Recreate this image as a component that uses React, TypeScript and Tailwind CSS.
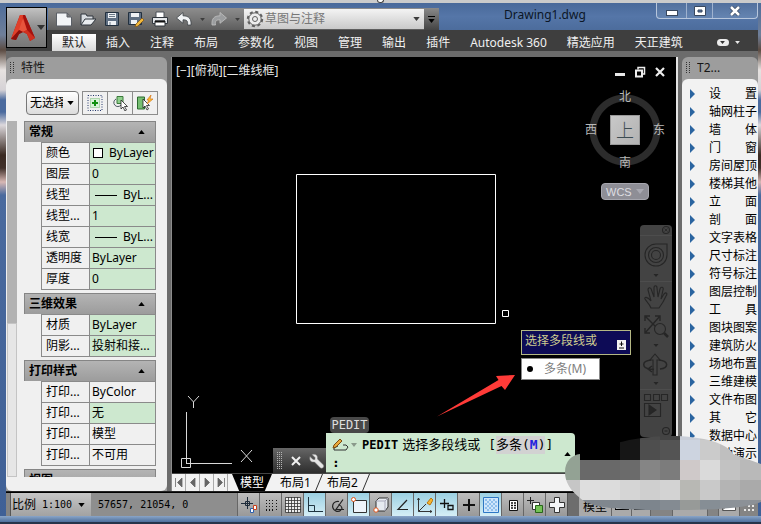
import { useState, type ReactNode } from "react";
import clsx from "clsx";
import { twMerge } from "tailwind-merge";

type Value = { label: string; value: string; kind?: "swatch" | "line"; plain?: boolean };

const sections: { title: string; rows: Value[] }[] = [
  {
    title: "常规",
    rows: [
      { label: "颜色", value: "ByLayer", kind: "swatch" },
      { label: "图层", value: "0" },
      { label: "线型", value: "ByL...", kind: "line" },
      { label: "线型...", value: "1" },
      { label: "线宽", value: "ByL...", kind: "line" },
      { label: "透明度", value: "ByLayer" },
      { label: "厚度", value: "0" },
    ],
  },
  {
    title: "三维效果",
    rows: [
      { label: "材质", value: "ByLayer" },
      { label: "阴影...", value: "投射和接..." },
    ],
  },
  {
    title: "打印样式",
    rows: [
      { label: "打印...", value: "ByColor", plain: true },
      { label: "打印...", value: "无" },
      { label: "打印...", value: "模型", plain: true },
      { label: "打印...", value: "不可用", plain: true },
    ],
  },
  { title: "视图", rows: [] },
];

const ribbonTabs = [
  "默认", "插入", "注释", "布局", "参数化", "视图", "管理", "输出", "插件",
  "Autodesk 360", "精选应用", "天正建筑",
];

const menuItems = [
  "设置", "轴网柱子", "墙体", "门窗", "房间屋顶", "楼梯其他", "立面", "剖面",
  "文字表格", "尺寸标注", "符号标注", "图层控制", "工具", "图块图案", "建筑防火",
  "场地布置", "三维建模", "文件布图", "其它", "数据中心", "帮助演示",
];

/* ---------- quick access icons ---------- */

const quickIcons: { name: string; icon: ReactNode }[] = [
  {
    name: "新建",
    icon: <path d="M.5 2h10.500l4.500 4v9H.5zM11 2v4h4" fill="#f2f4f6" stroke="#5a5f66" />,
  },
  {
    name: "打开",
    icon: (
      <>
        <path d="M1 14V3h5l1 2h6v3" fill="#d9dde1" stroke="#2f353c" />
        <path d="M1 14l4-6h11l-5 6z" fill="#e9ecef" stroke="#2f353c" />
      </>
    ),
  },
  {
    name: "保存",
    icon: (
      <>
        <path d="M1.500 1.500h13v13h-13z" fill="#5f6f82" stroke="#22303f" />
        <path d="M4 2h8v5H4zM4 10h8v4H4z" fill="#eef1f4" />
        <path d="M5 3.500h6M5 5.500h6M6 11v3" stroke="#6d7a88" />
      </>
    ),
  },
  {
    name: "另存为",
    icon: (
      <>
        <path d="M.5 1.500h13v12H.5z" fill="#5f6f82" stroke="#22303f" />
        <path d="M3 2h8v4H3zM3 9h6v4H3z" fill="#eef1f4" />
        <path d="M8 13l6-6 2 2-6 6-3 1z" fill="#f3b93a" stroke="#7a4d12" strokeWidth=".7" />
      </>
    ),
  },
  {
    name: "打印",
    icon: (
      <>
        <path d="M4 6V1h8v5" fill="#fff" stroke="#4b5158" />
        <path d="M.5 6.500h15v6H.5z" fill="#e3e6e9" stroke="#30363d" />
        <path d="M3 10h10v5H3z" fill="#fff" stroke="#30363d" />
        <path d="M3 10.500h10" stroke="#111" strokeWidth="2" />
      </>
    ),
  },
  {
    name: "放弃",
    icon: <path d="M.5 7L7 1.500v3.300c6 0 8.500 3 8 9.200h-3.500c.5-4-.5-5.200-4.500-5.200v3.500z" fill="#f1f3f5" stroke="#3c4248" strokeWidth=".8" />,
  },
];

function Caret({ className }: { className?: string }) {
  return (
    <svg viewBox="0 0 8 5" className={twMerge("h-[5px] w-2 shrink-0", className)} fill="currentColor">
      <path d="M0 0h8L4 5z" />
    </svg>
  );
}

function TitleBar() {
  return (
    <div className="flex h-[27px] bg-linear-to-b from-[#49699a] via-[#5576a8] to-[#4c6c9c] pl-[42px]">
      <div className="mt-[5px] flex h-[22px] w-[391px] shrink-0 items-center bg-linear-to-b from-[#8d8d8d] via-[#777] to-[#5d5d5d] pl-2">
        {quickIcons.map((q) => (
          <button key={q.name} aria-label={q.name} className="mr-2 size-4 shrink-0">
            <svg viewBox="0 0 16 16" className="size-4">{q.icon}</svg>
          </button>
        ))}
        <Caret className="h-[3px] w-[5px] text-[#3c3c3c]" />
        <button aria-label="重做" className="mr-2 ml-1.5 size-4 shrink-0">
          <svg viewBox="0 0 16 16" className="size-4">
            <path d="M15.500 7L9 1.500v3.300c-6 0-8.500 3-8 9.200h3.500c-.5-4 .5-5.200 4.500-5.200v3.500z" fill="#9b9d9f" stroke="#c2c2c2" strokeWidth=".8" />
          </svg>
        </button>
        <Caret className="h-[3px] w-[5px] text-[#3c3c3c]" />
        <label className="relative ml-1 flex h-5 flex-1 items-center bg-linear-to-b from-[#f4f4f4] to-[#c9c9c9] text-[#777]">
          <svg viewBox="0 0 18 18" className="ml-0.5 size-[18px] shrink-0" fill="none" stroke="#606060">
            <circle cx="9" cy="9" r="7" strokeWidth="2.400" strokeDasharray="3 2.500" />
            <circle cx="9" cy="9" r="6.200" fill="#ededed" />
            <circle cx="9" cy="9" r="2.500" />
          </svg>
          <select aria-label="工作空间" className="h-5 flex-1 appearance-none bg-transparent pl-px text-xs outline-none">
            <option>草图与注释</option>
          </select>
          <Caret className="mr-1 h-1 w-[7px] text-[#3c3c3c]" />
        </label>
        <button aria-label="自定义快速访问工具栏" className="flex h-[22px] w-[15px] flex-col items-center justify-center gap-0.5 bg-linear-to-b from-[#8a8a8a] to-[#444] text-black">
          <span className="h-px w-[7px] bg-black" />
          <Caret className="h-1 w-[7px]" />
        </button>
      </div>
      <h1 className="min-w-0 flex-1 truncate pl-[65px] text-xs leading-6 text-[#0b1626]">Drawing1.dwg</h1>
      <div className="flex h-4 overflow-hidden rounded-b border border-t-0 border-[#b7c6dc] bg-linear-to-b from-[#52709d] to-[#6585b2]">
        <button aria-label="最小化" className="flex w-[30px] items-center justify-center border-r border-[#9fb2cf]">
          <span className="mt-1 h-1.5 w-3 border border-[#39485e] bg-white" />
        </button>
        <button aria-label="最大化" className="flex w-[26px] items-center justify-center border-r border-[#9fb2cf]">
          <svg viewBox="0 0 12 10" className="h-2.5 w-3">
            <path d="M.5.5h11v9H.5z" fill="#fff" stroke="#39485e" />
            <path d="M4 4h4v2H4z" fill="#5876a3" stroke="#39485e" />
          </svg>
        </button>
        <button aria-label="关闭" className="flex w-[44px] items-center justify-center">
          <svg viewBox="0 0 12 10" className="h-2.5 w-3">
            <path d="M2 1l8 8M10 1L2 9" stroke="#39485e" strokeWidth="4" />
            <path d="M2 1l8 8M10 1L2 9" stroke="#fff" strokeWidth="2.500" />
          </svg>
        </button>
      </div>
    </div>
  );
}

function AppButton() {
  return (
    <button
      aria-label="应用程序菜单"
      className="absolute top-1 left-0 flex h-[41px] w-[41px] items-center gap-0.5 border border-black bg-linear-to-b from-[#c2c2c2] via-[#8e8e8e] to-[#777] pl-1"
    >
      <svg viewBox="0 0 24 28" className="h-7 w-6 shrink-0">
        <path d="M9 1h5l10 23-5 3-3-7-4-2-4 2-3 6-5-1z" fill="#b81a12" />
        <path d="M9 1h3l-1 13L0 25z" fill="#e0402a" />
        <path d="M14 1l10 23-8-8-4-15z" fill="#a5120e" />
        <path d="M12 4l4 12-4 2-4-2z" fill="#e8543c" />
        <path d="M12 18l4-2 8 8-5 3-3-7z" fill="#d0301f" />
        <path d="M0 25l8-9 4 2-4 2-3 6z" fill="#8c100c" />
      </svg>
      <Caret className="text-[#333]" />
    </button>
  );
}

function Ribbon() {
  const [active, setActive] = useState("默认");
  return (
    <nav className="flex h-[21px] items-end bg-[#3e3e3e] pl-[46px]">
      {ribbonTabs.map((tab) => (
        <button
          key={tab}
          onClick={() => setActive(tab)}
          className={clsx(
            "h-[17px] shrink-0 px-2.5 text-xs leading-4 whitespace-nowrap",
            tab === active ? "bg-linear-to-b from-white to-[#d9d9d9] text-[#222]" : "text-[#f0f0f0]"
          )}
        >
          {tab}
        </button>
      ))}
      <button aria-label="最小化功能区" className="ml-6 flex h-[17px] items-center gap-1.5 text-[#e8e8e8]">
        <span className="flex h-[7px] w-3 items-center justify-center rounded-sm bg-[#ececec]">
          <Caret className="h-[3px] w-[5px] text-[#333]" />
        </span>
        <Caret className="h-[3px] w-[5px]" />
      </button>
    </nav>
  );
}

/* ---------- palettes ---------- */

function PaletteHeader({ title }: { title: string }) {
  return (
    <div className="flex h-[22px] shrink-0 items-center gap-[7px] px-1 text-xs text-[#151515]">
      <svg viewBox="0 0 4 12" className="h-3 w-1 shrink-0" stroke="#333" strokeDasharray="1 1">
        <path d="M.5 0v12M3.500 0v12" />
      </svg>
      <h2 className="truncate">{title}</h2>
    </div>
  );
}

function PropertiesPalette() {
  return (
    <aside className="flex w-[161px] shrink-0 flex-col rounded-t-md bg-[#9d9d9d]">
      <PaletteHeader title="特性" />
      <div className="flex min-h-0 flex-1 flex-col rounded-md bg-[#f0f0f0] pb-3.5">
        <div className="flex h-[42px] shrink-0 items-center gap-[3px] pt-1.5 pl-5">
          <div className="relative flex h-6 w-[53px] items-center rounded border border-[#777] bg-linear-to-b from-white to-[#dcdcdc] pr-1">
            <select aria-label="选择对象" className="h-[22px] w-9 appearance-none overflow-hidden bg-transparent pl-[3px] text-xs text-clip outline-none">
              <option>无选择</option>
            </select>
            <Caret className="ml-auto h-1 w-[7px]" />
          </div>
          <div className="flex h-6 border border-[#8c8c8c]">
            <button aria-label="切换 PICKADD" className="flex w-[25px] items-center justify-center border-r border-[#8c8c8c]">
              <svg viewBox="0 0 16 16" className="size-4" fill="none">
                <path d="M1 .5h14v15H1z" stroke="#23366b" strokeDasharray="1 1.500" />
                <path d="M3.500 3.500h9v9h-9z" fill="#d7f2d7" stroke="#79b979" strokeDasharray="1 1" />
                <path d="M8 5v6M5 8h6" stroke="#109010" strokeWidth="2" />
              </svg>
            </button>
            <button aria-label="选择对象" className="flex w-[25px] items-center justify-center border-r border-[#8c8c8c]">
              <svg viewBox="0 0 16 16" className="size-4" strokeWidth="1">
                <path d="M5 1.500h6v7H5z" fill="#8fcf8c" stroke="#3b7a3b" />
                <path d="M4 4a4 4 0 1 0 5 6" fill="none" stroke="#4b5560" />
                <path d="M9 5v9l2-2 2 4 1.500-1-2-3.500h3z" fill="#fff" stroke="#222" strokeWidth=".8" />
              </svg>
            </button>
            <button aria-label="快速选择" className="flex w-6 items-center justify-center">
              <svg viewBox="0 0 16 16" className="size-4" strokeWidth="1">
                <path d="M.5 2h7v12h-7z" fill="#76be72" stroke="#2d6b2f" />
                <path d="M6 4v9l2-2 2 4 1.500-1-2-3.500h3z" fill="#fff" stroke="#222" strokeWidth=".8" />
                <path d="M14 0l-4 5h2l-2 4 6-5h-3z" fill="#ffc634" stroke="#d5761a" strokeWidth=".7" />
              </svg>
            </button>
          </div>
        </div>
        <div className="flex min-h-0 flex-1">
          <div className="flex w-[11px] shrink-0 flex-col pl-px">
            <div className="h-[202px] shrink-0 bg-[#b2b2b2]" />
            <div className="min-h-0 flex-1 border border-[#c4c4c4] bg-[#e6e6e6]" />
          </div>
          <div className="ml-[7px] w-[132px] overflow-hidden">
            {sections.map((s) => (
              <section key={s.title} className="mb-[3px]">
                <button className="flex h-[21px] w-full items-center justify-between border border-b-0 border-[#858585] bg-linear-to-b from-[#b4b4b4] to-[#9c9c9c] pr-2.5 pl-1 text-xs leading-4 font-bold text-black">
                  {s.title}
                  <Caret className="h-1 w-[7px] rotate-180" />
                </button>
                <table className="ml-[17px] w-[115px] table-fixed border-collapse text-xs text-black">
                  <tbody>
                    {s.rows.map((r, i) => (
                      <tr key={i}>
                        <th scope="row" className="h-[21px] w-12 border border-[#8a8a8a] p-0 pl-1 text-left leading-5 font-normal whitespace-nowrap">
                          {r.label}
                        </th>
                        <td className={clsx("h-[21px] border border-[#8a8a8a] p-0 pl-0.5 leading-5 whitespace-nowrap", !r.plain && "bg-[#cde8cf]")}>
                          <span className="flex items-center">
                            {r.kind === "swatch" && <span className="mr-1.5 ml-px size-2.5 border border-black bg-white" />}
                            {r.kind === "line" && <span className="mr-1.5 ml-[3px] h-px w-[22px] bg-black" />}
                            {r.value}
                          </span>
                        </td>
                      </tr>
                    ))}
                  </tbody>
                </table>
              </section>
            ))}
          </div>
        </div>
      </div>
    </aside>
  );
}

function ToolPalette() {
  return (
    <aside className="flex w-[76px] shrink-0 flex-col overflow-hidden rounded-t-md bg-[#9d9d9d]">
      <PaletteHeader title="T2..." />
      <ul className="min-h-0 flex-1 overflow-hidden rounded-t-md bg-[#f2f2f2] pt-1.5">
        {menuItems.map((m) => (
          <li key={m}>
            <button className="flex h-[18px] w-full items-center pl-2 text-xs leading-[18px] text-black">
              <svg viewBox="0 0 5 10" className="h-2.5 w-[5px]">
                <path d="M0 0l5 5-5 5z" fill="#2a64a0" />
              </svg>
              <span className="ml-3.5 flex w-12 shrink-0 justify-between">
                {m.length === 2 ? (
                  <>
                    <span>{m[0]}</span>
                    <span>{m[1]}</span>
                  </>
                ) : (
                  m
                )}
              </span>
            </button>
          </li>
        ))}
      </ul>
    </aside>
  );
}

/* ---------- drawing area ---------- */

function ViewCube() {
  return (
    <div className="absolute top-[30px] right-[11px] text-xs leading-4 text-[#b9b9b9]">
      <div className="grid grid-cols-[22px_36px_22px] grid-rows-[20px_46px_20px] place-items-center bg-[radial-gradient(circle,transparent_28px,#2c2c2c_29px,#2c2c2c_35px,transparent_36px)]">
        <span className="col-start-2">北</span>
        <span className="col-start-1 row-start-2 mr-2.5">西</span>
        <button className="col-start-2 row-start-2 size-[30px] border border-[#999] bg-linear-to-br from-[#c8c8c8] to-[#b2b2b2] text-lg leading-6 font-light text-[#3c4c52]">
          上
        </button>
        <span className="col-start-3 row-start-2 ml-2.5">东</span>
        <span className="col-start-2 row-start-3">南</span>
      </div>
      <button className="mt-2.5 ml-4 flex h-[17px] w-12 items-center justify-between rounded border border-[#a6a6ae] bg-[#8e8e96] px-1 font-['Liberation_Sans',sans-serif] text-[11px] text-[#dedee2]">
        WCS
        <Caret className="text-[#a9a9b2]" />
      </button>
    </div>
  );
}

function NavigationBar() {
  return (
    <div className="absolute top-[168px] right-1 w-8 rounded bg-[#434343]">
      <svg viewBox="0 0 32 212" className="h-[212px] w-8" fill="none" stroke="#262626" strokeWidth="1.100">
        <circle cx="26" cy="5" r="3.500" />
        <path d="M24.500 3.500l3 3M27.500 3.500l-3 3" strokeWidth=".8" />
        <path d="M0 10.500h32M0 56.500h32M0 164.500h32" stroke="#505050" strokeWidth=".8" />
        <path d="M16 19h11v11a11 11 0 1 1-11-11z" />
        <circle cx="16" cy="30" r="7.500" />
        <circle cx="16" cy="30" r="4.500" />
        <path d="M13.500 49h5L16 52zM13.500 119h5l-2.500 3zM13.500 157h5l-2.500 3z" fill="#262626" stroke="none" />
        <path d="M11 83c-2-5-5-7-6-9s2-3 6 2L8 65c0-3 3-3 3.500 0L14 72V63c0-3 3-3 3 0l1 9 2-8c1-3 4-2 3 1l-2 9 3-5c2-2 4-1 2 2-2 5-4 8-7 12z" />
        <path d="M5 91l18 18M20 91L5 108M5 96v-5h5M15 91h5v5M5 103v5h5" strokeWidth="1.400" />
        <circle cx="20" cy="104" r="5.500" fill="#434343" />
        <path d="M24 108l4 4" strokeWidth="2.500" />
        <path d="M13 150v-15h-3l5-6 5 6h-3v15z" />
        <path d="M19 135c10 1 10 8 1 9M11 135c-10 1-9 8-1 9l4 .5M12 141l-4 3 4 3" strokeWidth="1.500" />
        <path d="M4.500 169.500h6v6h-6zM13.500 169.500h6v6h-6zM21.500 169.500h6v6h-6zM4.500 178.500h16v13h-16z" />
        <path d="M9 180v10l7-5z" fill="#262626" />
        <circle cx="26" cy="206" r="3.500" />
        <path d="M24.500 206h3" />
      </svg>
    </div>
  );
}

function CommandLine() {
  return (
    <div className="absolute bottom-0 left-[101px] flex items-end">
      <div className="flex h-[25px] w-[53px] items-center gap-2 bg-linear-to-b from-[#666] to-[#2e2e2e] pl-1">
        <svg viewBox="0 0 6 17" className="h-[17px] w-1.5 shrink-0" stroke="#b5b5b5" strokeDasharray="1 1">
          <path d="M.5 0v17M2.500 0v17M4.500 0v17" />
        </svg>
        <button aria-label="关闭命令行">
          <svg viewBox="0 0 10 10" className="size-2.5" stroke="#f0f0f0" strokeWidth="2">
            <path d="M1 1l8 8M9 1L1 9" />
          </svg>
        </button>
        <button aria-label="自定义">
          <svg viewBox="0 0 16 16" className="size-4">
            <path d="M3 1.500l3 3v2H4l-3-3c-1 4 1 6 4.500 5.500l6 6c2 1 4-1 3-3l-6-6C9 2.500 7 .5 3 1.500z" fill="#e5e5e5" stroke="#777" strokeWidth=".5" />
          </svg>
        </button>
      </div>
      <div>
        <div className="ml-1 flex h-4 w-[39px] items-center justify-center rounded-sm bg-[#484848] font-['DejaVu_Sans_Mono',monospace] text-xs text-[#ddd]">
          PEDIT
        </div>
        <div className="relative h-10 w-[249px] rounded-tr border-b border-[#5e6d5f] bg-[#cde8cf] pt-[3px] pl-1.5 font-['DejaVu_Sans_Mono','Noto_Sans_CJK_SC',monospace] text-[13px] leading-[18px] text-black">
          <div className="flex items-center whitespace-nowrap">
            <svg viewBox="0 0 26 14" className="h-3.5 w-[26px] shrink-0">
              <path d="M6 8l-4 2v2h12l2-3-2-2h-3" fill="none" stroke="#333" />
              <path d="M1 10l1-3 6-6 2 2-6 6z" fill="#e9a83a" stroke="#7b4a10" />
              <path d="M19 5h6l-3 4z" fill="#8a9a8b" />
            </svg>
            <b className="ml-1 text-xs">PEDIT</b>
            <span className="ml-1">选择多段线或</span>
            <span className="ml-2">[</span>
            <button className="bg-[#d2d2d2]">
              多条(<b className="text-[#2222dd]">M</b>)
            </button>
            <span>]</span>
          </div>
          <label>
            <b>:</b>
            <input aria-label="命令" className="w-40 bg-transparent outline-none" />
          </label>
          <Caret className="absolute right-1 bottom-4 h-1 w-[7px] rotate-180" />
        </div>
      </div>
    </div>
  );
}

function Canvas() {
  return (
    <div className="relative min-h-0 flex-1 overflow-hidden bg-black">
      <div className="pt-1.5 pl-1 text-xs leading-4 text-[#e8e8e8]">[−][俯视][二维线框]</div>
      <div className="absolute top-2 right-2.5 flex items-center gap-2 text-white">
        <button aria-label="最小化视口" className="flex h-3.5 w-3 items-end justify-center pb-[3px]">
          <span className="h-[3px] w-2.5 bg-[#e8e8e8]" />
        </button>
        <button aria-label="还原视口">
          <svg viewBox="0 0 12 12" className="size-3" fill="none" stroke="#eee">
            <path d="M4 3.500V1.500h6.500V8H9" strokeWidth="1.500" />
            <path d="M2 4.500h6v6H2z" strokeWidth="2" />
          </svg>
        </button>
        <button aria-label="关闭视口">
          <svg viewBox="0 0 12 12" className="size-3" stroke="#eee" strokeWidth="2.200">
            <path d="M2 2l8 8M10 2l-8 8" />
          </svg>
        </button>
      </div>

      {/* model geometry, pick box and pointer arrow */}
      <svg className="absolute top-0 left-0 h-[417px] w-[504px]" viewBox="0 0 504 417" fill="none" stroke="#fff">
        <path d="M124.500 117.500h199v149h-199z" />
        <path d="M330.500 253.500h6v6h-6z" />
        <path d="M265 359.500L326.500 323 324 319 343 318 333 333 329.500 329z" fill="#ff3b38" stroke="none" />
      </svg>

      {/* UCS icon */}
      <svg className="absolute bottom-0 left-0 h-[80px] w-[90px]" viewBox="0 0 90 80" fill="none" stroke="#d8d8d8">
        <path d="M14.500 19v46M9.500 65.500h9v9h-9zM14 70.500h46M14.500 65v6" />
        <path d="M16 3l5.500 6L27 3M21.500 9v6M69 57l11 12M80 57L69 69" />
      </svg>

      <ViewCube />
      <NavigationBar />

      <div className="absolute top-[273px] left-[349px]">
        <div className="flex h-[25px] w-[110px] items-center justify-between border border-[#b4b884] bg-[#0d0b56] pr-1 pl-[3px] text-xs text-[#cdcb90]">
          <span className="pb-1">选择多段线或</span>
          <svg viewBox="0 0 9 10" className="mt-1 h-2.5 w-[9px]">
            <path d="M0 0h9v10H0z" fill="#f2f2f2" />
            <path d="M4.500 1.500V6M2.500 4h4M2 8h5" stroke="#111" />
          </svg>
        </div>
        <button className="mt-[3px] flex h-[22px] w-[79px] items-center gap-[11px] border border-[#888] bg-white pl-[5px] text-xs text-[#7d7d7d]">
          <span className="size-1.5 rounded-full bg-black" />
          多条(M)
        </button>
      </div>

      <CommandLine />
    </div>
  );
}

const tabArrows = [
  { name: "第一个", d: "M3.500 3v9M10 3v9L5.500 7.500z" },
  { name: "上一个", d: "M9 3v9L4.500 7.500z" },
  { name: "下一个", d: "M5 3v9l4.500-4.500z" },
  { name: "最后一个", d: "M10.500 3v9M4 3v9l4.500-4.500z" },
];

function Slash() {
  return (
    <svg viewBox="0 0 8 17" className="h-[17px] w-2 shrink-0" stroke="#333">
      <path d="M7.500 0L.5 17" />
    </svg>
  );
}

function LayoutTabs() {
  return (
    <div className="flex h-[18px] shrink-0 items-stretch border-t border-[#444] bg-[#f2f2f2] text-xs leading-4 text-black">
      {tabArrows.map((a) => (
        <button key={a.name} aria-label={a.name} className="w-3.5 border-r border-[#aaa]">
          <svg viewBox="0 0 14 15" className="h-[15px] w-3.5" fill="#666" stroke="#666" strokeWidth=".8">
            <path d={a.d} />
          </svg>
        </button>
      ))}
      <button className="ml-1 w-10 bg-black text-white [clip-path:polygon(0_0,100%_0,82%_100%,18%_100%)]">模型</button>
      <button className="ml-2 whitespace-nowrap">布局1</button>
      <span className="ml-1">
        <Slash />
      </span>
      <button className="ml-1 whitespace-nowrap">布局2</button>
      <span className="ml-1">
        <Slash />
      </span>
    </div>
  );
}

/* ---------- status bar ---------- */

const toggles: { name: string; on?: boolean; icon: ReactNode }[] = [
  {
    name: "推断约束",
    icon: (
      <>
        <path d="M6.500 0v12M0 6.500h12" stroke="#1d2b3a" />
        <path d="M4.500 4.500h4v4h-4z" fill="none" stroke="#1d2b3a" />
        <path d="M9.500 11.500h3v4h-3z" fill="#fff" stroke="#2b5fae" />
        <path d="M12.500 8.500h3v4h-3z" fill="#fff" stroke="#c9401c" />
      </>
    ),
  },
  { name: "捕捉模式", icon: <path d="M3.500 3v11M6.500 3v11M9.500 3v11M3 13.500h9M13.500 3v11" stroke="#111" strokeDasharray="1 2" /> },
  {
    name: "栅格显示",
    icon: <path d="M.5.5h15v15H.5zM3.500 0v16M6.500 0v16M9.500 0v16M12.500 0v16M0 3.500h16M0 6.500h16M0 9.500h16M0 12.500h16" fill="#eee" stroke="#333" strokeWidth=".8" />,
  },
  { name: "正交模式", on: true, icon: <path d="M1.500 0v14.500H16M1.500 8.500h6v6" fill="none" stroke="#1f3440" /> },
  {
    name: "极轴追踪",
    icon: <path d="M15 12.500H7l7-10M10 4.500a5 5 0 1 0 2 8.500M9 8a4 4 0 0 1 4 4" fill="none" stroke="#222" strokeWidth="1.200" />,
  },
  {
    name: "对象捕捉",
    on: true,
    icon: (
      <>
        <path d="M2.500 3.500h13v12h-13z" fill="#eef4fb" stroke="#333" />
        <circle cx="2.500" cy="2.500" r="2" fill="#fff" stroke="#e0551c" />
      </>
    ),
  },
  {
    name: "三维对象捕捉",
    icon: (
      <>
        <path d="M3 4l3-3h9v9l-3 4H3z" fill="#e6eaf0" stroke="#333" />
        <path d="M3 4h9l3-3M12 4v10" fill="none" stroke="#aab" />
        <circle cx="3" cy="13" r="2.200" fill="#fff" stroke="#e0551c" />
      </>
    ),
  },
  { name: "对象捕捉追踪", on: true, icon: <path d="M13 12.500H3L12 3" fill="none" stroke="#222" strokeWidth="1.200" /> },
  {
    name: "动态 UCS",
    on: true,
    icon: (
      <>
        <path d="M1.500 1v13.500H15M1.500 14.500L9 7M.5 3l1-2 1 2M13 13.500l2 1-2 1" fill="none" stroke="#333" />
        <path d="M10 6l4-5 2 2-3 5z" fill="#f7b62f" stroke="#b97511" />
      </>
    ),
  },
  { name: "动态输入", on: true, icon: <path d="M5.500 2v9M1 6.500h9M9 8.500h5v4H9z" fill="none" stroke="#111" strokeWidth="1.300" /> },
  { name: "线宽", icon: <path d="M8 2v12M2 8h12" stroke="#111" strokeWidth="2" /> },
  {
    name: "透明度",
    on: true,
    icon: (
      <>
        <path d="M.5.5h15v15H.5z" fill="#cfe6fb" stroke="#2d77c4" />
        <path d="M2 3h12M2 7h12M2 11h12" stroke="#8fc0ec" strokeWidth="2" strokeDasharray="2 2" />
        <path d="M4 5h10M4 9h10M4 13h10" stroke="#8fc0ec" strokeWidth="2" strokeDasharray="2 2" />
      </>
    ),
  },
  {
    name: "快捷特性",
    icon: (
      <>
        <path d="M4.500 3.500h8v10h-8z" fill="#fff" stroke="#111" />
        <path d="M6 6h5M6 8.500h5M6 11h5" stroke="#111" strokeWidth="1.500" strokeDasharray="2 1" />
      </>
    ),
  },
  {
    name: "选择循环",
    icon: (
      <>
        <path d="M3.500 0v7M0 3.500h7" stroke="#222" />
        <path d="M5.500 5.500h7v7h-7z" fill="#fff" stroke="#333" />
        <path d="M8.500 8.500h7v7h-7z" fill="#74c255" stroke="#28651b" />
      </>
    ),
  },
  { name: "注释监视器", icon: <path d="M5.500.5h5v5h5v5h-5v5h-5v-5h-5v-5h5z" fill="#f4f6f8" stroke="#333" /> },
];

function StatusBar() {
  return (
    <footer className="flex h-6 shrink-0 items-stretch border-t border-black bg-[#848484] font-['DejaVu_Sans_Mono','Noto_Sans_CJK_SC',monospace] text-[10px] text-black">
      <button className="ml-1 flex w-[81px] shrink-0 items-center border-l border-[#555] bg-linear-to-b from-[#c6c6c6] to-[#a2a2a2] pl-px whitespace-nowrap">
        <span className="text-xs">比例</span>
        <span className="mx-1.5">1:100</span>
        <Caret className="h-1 w-[7px]" />
      </button>
      <output className="w-[146px] shrink-0 truncate bg-[#8e8e8e] pl-[7px] leading-6">57657, 21054, 0</output>
      {toggles.map((t) => (
        <button
          key={t.name}
          aria-label={t.name}
          aria-pressed={!!t.on}
          className={clsx(
            "flex w-[22px] shrink-0 items-center justify-center border-l border-[#666]",
            t.on ? "bg-linear-to-b from-[#9bd0e2] to-[#d5eef6]" : "bg-linear-to-b from-[#bdbdbd] to-[#999]"
          )}
        >
          <svg viewBox="0 0 16 16" className="size-4">{t.icon}</svg>
        </button>
      ))}
      <span className="w-3 border-l border-[#555] bg-[#6d6d6d]" />
      <button className="w-8 bg-[#aaa] pt-1 text-xs whitespace-nowrap">模型</button>
      <button aria-label="快速查看布局" className="flex w-5 items-center justify-center border-l border-[#666] bg-[#aaa]">
        <span className="h-2.5 w-3.5 border border-black bg-[#ddd]" />
      </button>
      <button aria-label="快速查看图形" className="flex w-5 items-center justify-center border-x border-[#666] bg-[#aaa]">
        <span className="h-2.5 w-3.5 border border-black bg-[#ddd]" />
      </button>
      <button className="ml-auto w-9 border-x border-[#666] bg-[#aaa]">1:100</button>
      <button aria-label="全屏显示" className="ml-2.5 flex w-[22px] items-center justify-center border-x border-[#666] bg-[#aaa]">
        <svg viewBox="0 0 14 12" className="h-3 w-3.5">
          <path d="M.5.5h13v11H.5z" fill="#fff" stroke="#555" />
          <path d="M1 11L13 1H1z" fill="#888" />
        </svg>
      </button>
      <svg viewBox="0 0 18 20" className="mt-0.5 h-5 w-[18px] shrink-0" fill="#e8e8e8">
        <path d="M12 6h2v2h-2zM8 10h2v2H8zM12 10h2v2h-2zM4 14h2v2H4zM8 14h2v2H8zM12 14h2v2h-2z" />
      </svg>
    </footer>
  );
}

/* ---------- pixelated patch over the corner ---------- */

const mosaic = [
  ["#000", "#000", "#000", "#161616", "#4a4a4a", "#444", "#c9ced8", "#c5c5c5", "#c0c0c0", "#c4c4c4"],
  ["#93a294", "#000", "#000", "#161616", "#4e4e4e", "#545454", "#cdd4e0", "#cbcbcb", "#bfbfbf", "#c0c0c0"],
  ["#93a294", "#696969", "#696969", "#6b6b6b", "#858585", "#7c7c7c", "#cfc9c9", "#dadada", "#c2c2c2", "#b9b9b9"],
  ["#c6c6c6", "#dedede", "#dcdcdc", "#d5d5d5", "#cfcfcf", "#d3d3d3", "#b8b8b4", "#c9c9c9", "#b4b4b4", "#aaaaaa"],
  ["#90949a", "#7f868e", "#80878e", "#81888f", "#7d858d", "#848b92", "#979a98", "#868e95", "#8c9298", "#8c9197"],
];

function Mosaic() {
  return (
    <svg className="pointer-events-none absolute right-0 bottom-2.5 h-[80px] w-[201px]" viewBox="560 434 201 80" shapeRendering="crispEdges">
      <clipPath id="patch">
        <path d="M565 472C565 461 572 455 580 454C600 448 630 436 670 436C705 436 728 444 733 454L761 464V502C740 510 700 510 660 510C620 510 590 508 580 498C570 490 565 482 565 472z" />
      </clipPath>
      <g clipPath="url(#patch)">
        {mosaic.map((row, y) =>
          row.map((fill, x) => (
            <rect key={`${x}-${y}`} x={560 + x * 20} y={420 + y * 20} width={x === 9 ? 21 : 20} height="20" fill={fill} />
          ))
        )}
      </g>
    </svg>
  );
}

export default function App() {
  return (
    <div className="relative flex h-screen min-h-[480px] w-full flex-col overflow-hidden bg-[linear-gradient(#4b6b9b_0,#6f7f99_35px,#5b4b42_50px,#e6e2e0_70px,#d5d2d6_90px,#4a6a9e_100px,#4a6a9e_112px,#dcd8dc_125px,#3a2a22_155px,#40302a_168px,#d8b8b4_182px,#4a6a9e_195px,#3f6096_100%)] font-['Noto_Sans','Noto_Sans_CJK_SC',sans-serif]">
      <div className="flex h-[3px] shrink-0 justify-center bg-[#cbcbcb]">
        <span className="h-[3px] w-[7px] rounded-b-full border border-t-0 border-[#444] bg-white" />
      </div>
      <div className="flex min-h-0 flex-1 flex-col pr-[3px] pl-1.5">
        <header className="relative shrink-0">
          <TitleBar />
          <Ribbon />
          <AppButton />
        </header>
        <div className="flex min-h-0 flex-1 border-b border-[#222] bg-[#6c6c6c] pt-1.5">
          <PropertiesPalette />
          <main className="mr-1 ml-1 flex min-w-0 flex-1 flex-col border-r-2 border-l border-[#e4e4e4] border-l-[#8c8c8c]">
            <Canvas />
            <LayoutTabs />
          </main>
          <ToolPalette />
        </div>
        <StatusBar />
      </div>
      <div className="h-2 shrink-0 border-b-2 border-[#26344a] bg-linear-to-b from-[#8aa5c8] to-[#4d6f9c]" />
      <Mosaic />
    </div>
  );
}
